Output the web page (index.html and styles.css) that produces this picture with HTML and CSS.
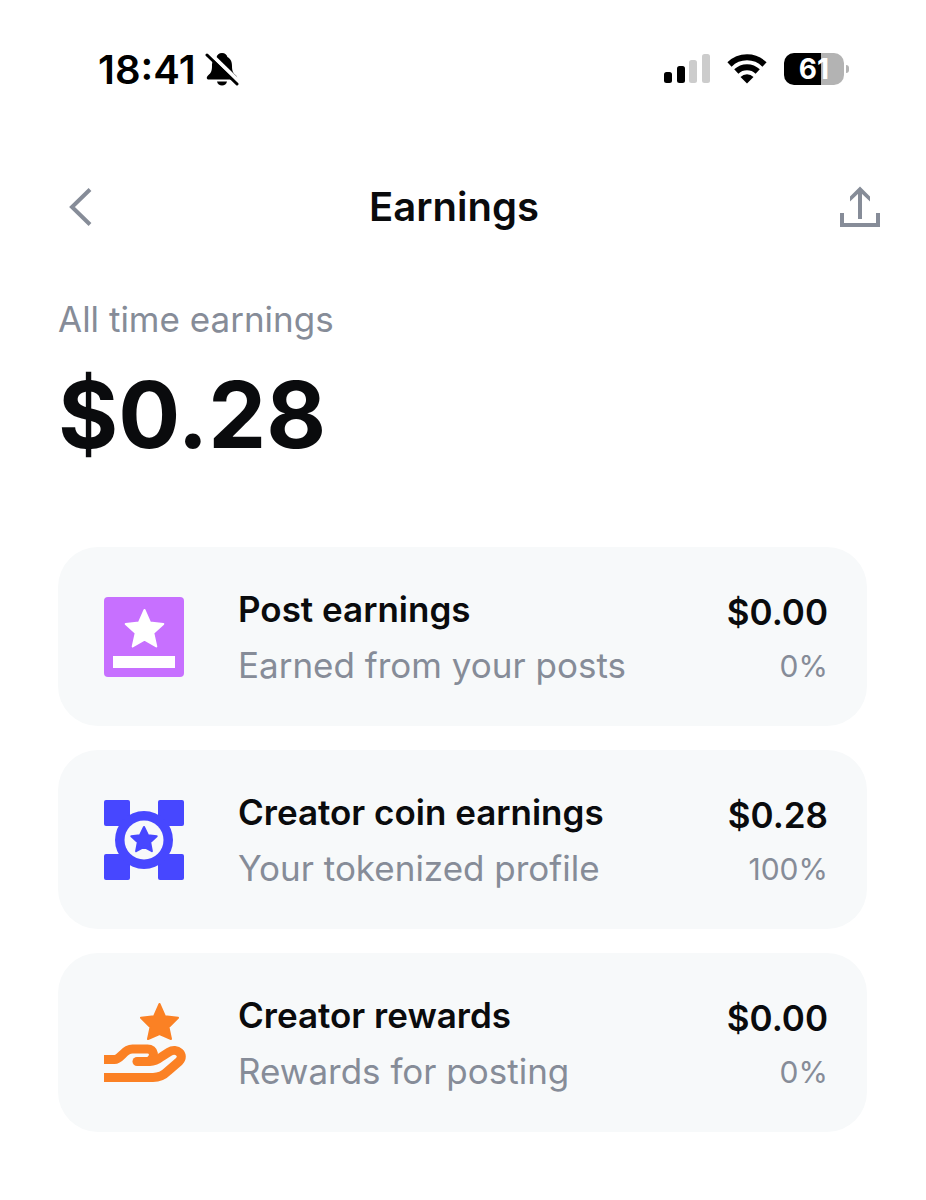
FILE: index.html
```html
<!DOCTYPE html>
<html lang="en">
<head>
  <meta charset="UTF-8" />
  <meta name="viewport" content="width=device-width, initial-scale=1.0" />
  <title>Earnings</title>
  <link rel="stylesheet" href="styles.css">
</head>
<body>

  <div class="status-bar">
    <div class="status-left">
      <span class="time">18:41</span>
      <svg class="bell" width="34" height="34" viewBox="0 0 34 34" aria-hidden="true">
        <path d="M17 1c-3 0-5 2-5.400 4C8 7 7 10 7 14c0 5-1 7-4 9.500-2 2-1.500 4 1 4h26c2.500 0 3-2 1-4-3-2.500-4-4.500-4-9.500 0-4-1-7-4.600-9C22 3 20 1 17 1z" />
        <path d="M12 29.500h10c-.5 2.500-2.500 4-5 4s-4.500-1.500-5-4z" />
        <path d="M5 1.500l28 27" stroke="#fff" stroke-width="4" />
        <path d="M2 3l30 29" stroke="#000" stroke-width="3" stroke-linecap="round" />
      </svg>
    </div>
    <div class="status-right">
      <svg width="46" height="30" viewBox="0 0 46 30" aria-hidden="true">
        <rect x="0" y="18" width="8" height="11" rx="2.500" />
        <rect x="13" y="12" width="8" height="17" rx="2.500" />
        <rect x="25" y="6" width="8" height="23" rx="2.500" fill="#ccc" />
        <rect x="38" y="0" width="8" height="29" rx="2.500" fill="#ccc" />
      </svg>
      <svg width="40" height="30" viewBox="0 0 40 30" aria-hidden="true">
        <g fill="none" stroke="#000" stroke-width="6">
          <path d="M2.500 10.500a25 25 0 0 1 35 0" />
          <path d="M9.300 17.500a15.400 15.400 0 0 1 21.400 0" />
        </g>
        <path d="M20 29.500l-6.500-6.500a9 9 0 0 1 13 0z" />
      </svg>
      <div class="battery"><span class="battery-level">61</span></div>
    </div>
  </div>

  <header>
    <button class="icon-btn" aria-label="Back">
      <svg width="44" height="44" viewBox="0 0 44 44">
        <path d="M32 4.500L14 22l18 17.500" fill="none" stroke="#868c98" stroke-width="4" />
      </svg>
    </button>
    <h1>Earnings</h1>
    <button class="icon-btn" aria-label="Share">
      <svg width="44" height="44" viewBox="0 0 44 44">
        <g fill="none" stroke="#868c98" stroke-width="4">
          <path d="M4 28v12h36V28" />
          <path d="M22 34V5" />
        </g>
        <path d="M22 1.500l10 10v5L22 7l-10 9.500v-5z" fill="#868c98" />
      </svg>
    </button>
  </header>

  <main>
    <section class="total">
      <h2>All time earnings</h2>
      <p class="total-amount">$0.28</p>
    </section>

    <section class="cards">
      <div class="card">
        <svg class="card-icon" width="84" height="84" viewBox="0 0 84 84" aria-hidden="true">
          <rect x="2" y="2" width="80" height="80" rx="4" fill="#c770ff" />
          <path d="M42.500 15l5.500 12.500 13.300 1.400-10 9.100 3 13.500-11.800-6.800-11.800 6.800 3-13.500-10-9.100L37 27.500z" fill="#fff" stroke="#fff" stroke-width="2" stroke-linejoin="round" />
          <rect x="11" y="61" width="62" height="12" fill="#fff" />
        </svg>
        <div class="card-text">
          <h3>Post earnings</h3>
          <p>Earned from your posts</p>
        </div>
        <div class="card-value">
          <strong>$0.00</strong>
          <span>0%</span>
        </div>
      </div>

      <div class="card">
        <svg class="card-icon" width="84" height="84" viewBox="0 0 84 84" aria-hidden="true">
          <g fill="#4747ff">
            <rect x="2" y="2" width="26" height="26" rx="2" />
            <rect x="56" y="2" width="26" height="26" rx="2" />
            <rect x="2" y="56" width="26" height="26" rx="2" />
            <rect x="56" y="56" width="26" height="26" rx="2" />
            <circle cx="42" cy="42" r="29" />
          </g>
          <circle cx="42" cy="42" r="19.500" fill="#f7f9fa" />
          <path d="M42 29l4 8.300 8.700 1-6.500 6 1.700 8.900-7.900-4.400-7.900 4.400 1.700-8.900-6.500-6 8.700-1z" fill="#4747ff" stroke="#4747ff" stroke-width="2" stroke-linejoin="round" />
        </svg>
        <div class="card-text">
          <h3>Creator coin earnings</h3>
          <p>Your tokenized profile</p>
        </div>
        <div class="card-value">
          <strong>$0.28</strong>
          <span>100%</span>
        </div>
      </div>

      <div class="card">
        <svg class="card-icon" width="84" height="84" viewBox="0 0 84 84" aria-hidden="true">
          <path d="M57.500 3L63 15.300l13 1.500-9.500 9.400L69 38l-11.500-5L46 38l2.500-11.800-9.500-9.400 13-1.500z" fill="#fb8124" stroke="#fb8124" stroke-width="2" stroke-linejoin="round" />
          <g fill="none" stroke="#fb8124" stroke-width="9" stroke-linejoin="round">
            <path d="M2 58.500h10.500c3 0 5-2 8-5 3.500-4 6-5.500 10-5.500h15c7 0 8 8 2 12" />
            <path d="M35 60.500h13c5 0 8-2 12-5l7-4.500c8-5 16.500 3 10 9.500L66 70c-4 4-8 6.500-15 6.500H2" />
          </g>
          <circle cx="35" cy="60.500" r="4.500" fill="#fb8124" />
        </svg>
        <div class="card-text">
          <h3>Creator rewards</h3>
          <p>Rewards for posting</p>
        </div>
        <div class="card-value">
          <strong>$0.00</strong>
          <span>0%</span>
        </div>
      </div>
    </section>
  </main>

</body>
</html>
```
FILE: styles.css
```css
* {
  box-sizing: border-box;
}

body {
  font-family: Inter, sans-serif;
  margin: 0;
  background-color: #fff;
  color: #0a0b0d;
}

h1,
h2,
h3,
p {
  margin: 0;
}

/* Status bar */
.status-bar {
  display: flex;
  align-items: center;
  justify-content: space-between;
  padding: 45px 77px 0 98px;
  color: #000;
}

.status-left,
.status-right {
  display: flex;
  align-items: center;
  height: 48px;
}

.status-left {
  gap: 9px;
}

.status-right {
  gap: 17px;
}

.time {
  font-size: 40px;
  font-weight: 600;
}

.battery {
  position: relative;
  width: 60px;
  height: 32px;
  border-radius: 10px;
  background: linear-gradient(to right, #000 61%, #b3b3b3 61%);
  color: #fff;
  font-size: 28px;
  font-weight: 700;
  line-height: 32px;
  text-align: center;
  margin-right: 5px;
}

.battery::after {
  content: "";
  position: absolute;
  left: 62px;
  top: 12px;
  width: 3px;
  height: 8px;
  border-radius: 0 4px 4px 0;
  background-color: #b3b3b3;
}

/* Header */
header {
  display: flex;
  align-items: center;
  padding: 90px 44px 0 58px;
}

h1 {
  flex: 1;
  padding-right: 32px;
  font-size: 40px;
  font-weight: 600;
  line-height: 48px;
  text-align: center;
}

.icon-btn {
  display: flex;
  padding: 0;
  border: none;
  background: none;
  cursor: pointer;
}

/* Content */
main {
  padding: 64px 59px 60px 58px;
}

h2 {
  color: #868c98;
  font-size: 35px;
  font-weight: 400;
  line-height: 48px;
}

.total-amount {
  font-size: 92px;
  font-weight: 700;
  line-height: 120px;
  margin-top: 12px;
}

.cards {
  display: flex;
  flex-direction: column;
  gap: 24px;
  margin-top: 72px;
}

.card {
  display: flex;
  align-items: center;
  padding: 35px 39px 35px 44px;
  border-radius: 40px;
  background-color: #f7f9fa;
}

.card-icon {
  flex-shrink: 0;
  margin-right: 52px;
}

.card-text {
  flex: 1;
}

h3 {
  font-size: 35px;
  font-weight: 600;
  line-height: 54px;
}

.card-text p {
  color: #868c98;
  font-size: 35px;
  line-height: 51px;
  margin-top: 4px;
}

.card-value {
  display: flex;
  flex-direction: column;
  gap: 2px;
  text-align: right;
}

.card-value strong {
  font-size: 35px;
  font-weight: 600;
  line-height: 56px;
}

.card-value span {
  color: #868c98;
  font-size: 30px;
  line-height: 48px;
}
```
